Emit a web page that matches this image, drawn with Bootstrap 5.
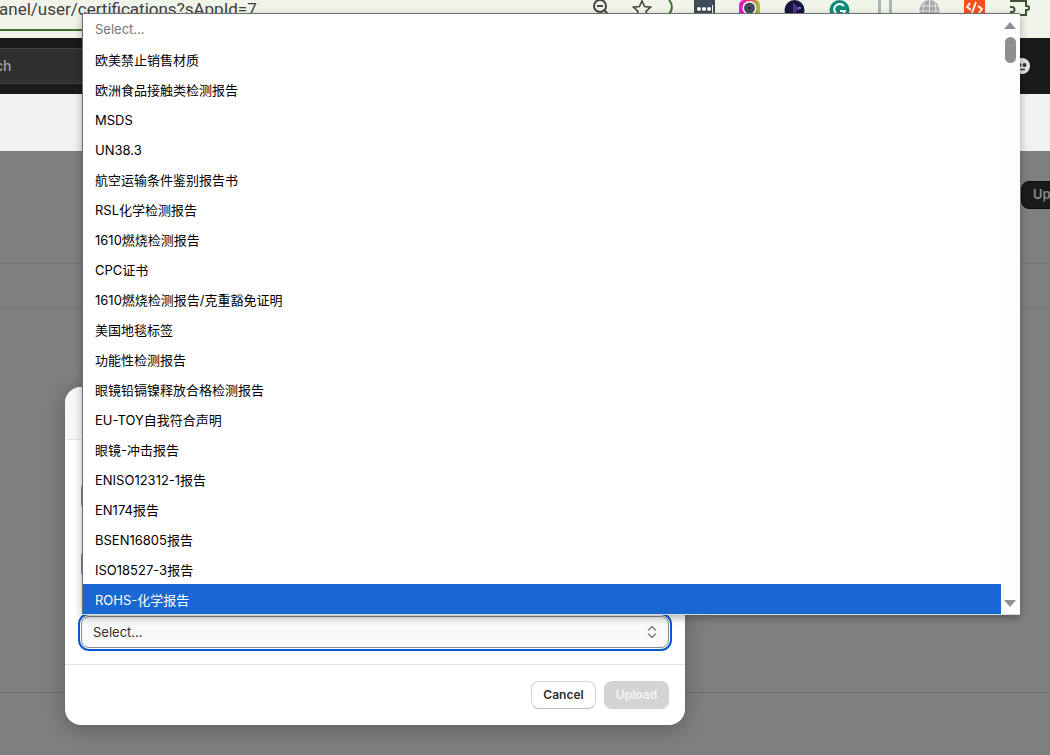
<!DOCTYPE html>
<html lang="zh">
<head>
  <meta charset="UTF-8">
  <meta name="viewport" content="width=device-width, initial-scale=1">
  <title>Certifications</title>
  <link href="https://cdn.jsdelivr.net/npm/bootstrap@5.3.2/dist/css/bootstrap.min.css" rel="stylesheet">
  <style>
    html, body { height: 755px; overflow: hidden; }
    body { background: #7f7f7f; font-family: Inter, "Noto Sans CJK SC", sans-serif; font-size: 13px; position: relative; }

    /* browser chrome */
    .chrome-bar { height: 38px; background: #f1f4e9; overflow: hidden; }
    .chrome-top { height: 29px; }
    .url-text { font-family: Roboto, sans-serif; font-size: 17px; line-height: 18px; color: #3c4043; margin-left: -1px; white-space: nowrap; }
    .chrome-icons { height: 29px; padding-right: 8px; }
    .tool-slot { width: 45px; height: 16px; display: flex; justify-content: center; }
    .tool-slot.is-narrow { width: 41px; }
    .tool-slot.is-arc { width: 20px; }
    .load-line { width: 220px; height: 2px; background: #3f7132; }

    /* page behind the dimming */
    .top-nav { height: 56px; background: #1a1a1a; padding: 10px 20px 10px 0; }
    .search-box { width: 300px; height: 36px; background: #303030; border: 1px solid #444; border-left: 0; color: #a5a5a5; font-size: 14px; line-height: 34px; font-weight: 500; text-indent: -5px; }
    .light-band { height: 57px; background: #f1f1f1; }
    .head-band { height: 113px; padding-top: 30px; border-bottom: 1px solid #727272; }
    .up-btn { width: 70px; height: 28px; margin-right: -41px; background: #1a1a1a; color: #8a8a8a; border: 1px solid #0d0d0d; border-radius: 8px; font-size: 13px; font-weight: 600; padding: 0 0 0 11px; text-align: left; }
    .tab-band { height: 44px; border-bottom: 1px solid #727272; }
    .list-band { height: 385px; border-bottom: 1px solid #6c6c6c; }

    /* modal */
    .upload-modal { position: absolute; left: 65px; top: 387px; width: 620px; height: 338px; background: #fff; border-radius: 16px; box-shadow: 0 4px 22px rgba(0, 0, 0, .28); overflow: hidden; }
    .upload-head { height: 53px; background: #f7f7f7; border-bottom: 1px solid #e3e3e3; }
    .upload-body { height: 224px; padding: 16px; gap: 12px; }
    .field-label { height: 20px; margin-bottom: 4px; }
    .field-input { height: 32px; padding: 0 12px; border: 1px solid #8a8a8a; border-radius: 8px; background: #fdfdfd; font-size: 13px; }
    .field-select { height: 32px; padding: 2px 11px 0; border: 1px solid #8a8a8a; border-radius: 8px; background-color: #fafafa; color: #303030; font-size: 13px; outline: 2px solid #005bd3; outline-offset: 1px; background-position: right 8px center; background-size: 16px 16px; background-image: url("data:image/svg+xml,%3Csvg xmlns='http://www.w3.org/2000/svg' viewBox='0 0 16 16'%3E%3Cpath d='M4.500 6 8 2.500 11.500 6M4.500 10 8 13.500 11.500 10' fill='none' stroke='%23808080' stroke-width='1.500' stroke-linecap='round' stroke-linejoin='round'/%3E%3C/svg%3E"); }
    .upload-foot { height: 61px; padding: 16px; gap: 8px; border-top: 1px solid #e3e3e3; }
    .btn-cancel, .btn-upload { width: 65px; height: 28px; padding: 0; font-size: 12px; font-weight: 600; border-radius: 8px; }
    .btn-cancel { background: #fff; color: #303030; border: 1px solid #d4d4d4; border-bottom-color: #bbb; }
    .btn-upload, .btn-upload:disabled { background: #d4d4d4; color: #f4f4f4; border: 0; opacity: 1; }

    /* native select popup */
    .select-popup { position: absolute; left: 82px; top: 13px; width: 938px; height: 602px; background: #fff; border-top: 1px solid #6f6f6f; border-left: 1px solid #6f6f6f; border-bottom: 1px solid #d8d8d8; box-shadow: 0 3px 8px rgba(0, 0, 0, .3); }
    .popup-list { flex: 1 1 auto; margin: 0; padding: 0; list-style: none; }
    .popup-list li { height: 30px; line-height: 32px; padding-left: 12px; color: #000; white-space: nowrap; }
    .popup-list li.is-placeholder { color: #757575; line-height: 30px; }
    .popup-list li.is-current { background: #1967d2; color: #fff; }
    .popup-scroll { width: 19px; background: #fdfdfd; padding: 8px 3px 7px; }
    .scroll-thumb { width: 11px; height: 26px; margin: 8px 0 0 1px; background: #8f8f8f; border-radius: 6px; }
    .scroll-up, .scroll-down { width: 0; height: 0; border-left: 6.5px solid transparent; border-right: 6.5px solid transparent; }
    .scroll-up { border-bottom: 7px solid #8f8f8f; }
    .scroll-down { border-top: 7px solid #8f8f8f; }
  </style>
</head>
<body>
  <div class="chrome-bar">
    <div class="chrome-top d-flex justify-content-between">
      <div class="url-text">anel/user/certifications?sAppId=7</div>
      <div class="chrome-icons d-flex align-items-start">
        <div class="tool-slot is-narrow"><svg width="20" height="16" viewBox="0 0 20 16"><circle cx="9" cy="6" r="6" fill="none" stroke="#444" stroke-width="2"/><path d="M6 6h6M13 10l4 4" stroke="#444" stroke-width="2"/></svg></div>
        <div class="tool-slot is-narrow"><svg width="20" height="16" viewBox="0 0 20 16"><path d="M10 1l2.600 5.500 5.900.7-4.400 4 1.200 5.800-5.300-3-5.300 3 1.200-5.800-4.400-4 5.900-.7z" fill="none" stroke="#444" stroke-width="1.600"/></svg></div>
        <div class="tool-slot is-arc"><svg width="20" height="16" viewBox="0 0 20 16"><path d="M7 0a10 10 0 0 1 0 14" fill="none" stroke="#3f7132" stroke-width="2"/></svg></div>
        <div class="tool-slot"><svg width="21" height="16" viewBox="0 0 21 16"><rect width="21" height="16" fill="#3f4a56"/><circle cx="5" cy="9" r="2" fill="#fff"/><circle cx="10" cy="9" r="2" fill="#fff"/><circle cx="15" cy="9" r="2" fill="#fff"/><rect x="18" y="5" width="1" height="8" fill="#fff"/></svg></div>
        <div class="tool-slot"><svg width="21" height="16" viewBox="0 0 21 16"><defs><linearGradient id="ring" x1="0" x2="1"><stop offset="0" stop-color="#d81bd8"/><stop offset=".5" stop-color="#ff2d6f"/><stop offset="1" stop-color="#9bd32c"/></linearGradient></defs><rect width="21" height="18" rx="5" fill="url(#ring)"/><circle cx="10.500" cy="8" r="7" fill="#fff"/><circle cx="10.500" cy="8" r="5.500" fill="#3f4d5c"/><circle cx="10.500" cy="8" r="1" fill="#111"/></svg></div>
        <div class="tool-slot"><svg width="21" height="16" viewBox="0 0 21 16"><circle cx="10.500" cy="10" r="10" fill="#14163a"/><path d="M9 2l6 7-6 6z" fill="#5b2d8e"/><path d="M14 8h3" stroke="#36d6d0" stroke-width="1.500"/></svg></div>
        <div class="tool-slot"><svg width="21" height="16" viewBox="0 0 21 16"><circle cx="10.500" cy="10" r="10" fill="#0b8a78"/><path d="M15 6a5.500 5.500 0 1 0 1 5h-5" fill="none" stroke="#fff" stroke-width="2"/></svg></div>
        <div class="tool-slot"><svg width="16" height="16" viewBox="0 0 16 16"><rect x="1" width="3" height="16" fill="#a9b4bb"/><rect x="12" width="3" height="16" fill="#a9b4bb"/></svg></div>
        <div class="tool-slot"><svg width="21" height="16" viewBox="0 0 21 16"><circle cx="10.500" cy="10" r="10" fill="#a8a8a8"/><path d="M.5 6h20M.5 11h20M10.500 0v20M5 1q-2 9 0 18M16 1q2 9 0 18" fill="none" stroke="#e6e6e6"/></svg></div>
        <div class="tool-slot"><svg width="21" height="16" viewBox="0 0 21 16"><rect width="21" height="16" fill="#f4511e"/><path d="M6 3 3 7l4 3M12 2 8 13M14 6l4 3-3 4" fill="none" stroke="#fff" stroke-width="1.800"/></svg></div>
        <div class="tool-slot"><svg width="21" height="16" viewBox="0 0 21 16"><path d="M1 1h3a2 2 0 0 1 0 0h13v5h1a2 2 0 0 1 0 4h-1v5H2v-3h1a2.500 2.500 0 0 0 0-5H1" fill="none" stroke="#3f5236" stroke-width="2"/></svg></div>
      </div>
    </div>
    <div class="load-line"></div>
  </div>

  <div class="top-nav d-flex justify-content-between align-items-center">
    <div class="search-box">ch</div>
    <svg width="16" height="16" viewBox="0 0 16 16"><circle cx="8" cy="8" r="8" fill="#e3e3e3"/><circle cx="5.500" cy="7" r="2" fill="#333"/><circle cx="10.500" cy="7" r="2" fill="#333"/><path d="M5 11.500h6" stroke="#333" stroke-width="1.500"/></svg>
  </div>
  <div class="light-band"></div>
  <div class="head-band d-flex justify-content-end align-items-start">
    <button type="button" class="btn up-btn">Up</button>
  </div>
  <div class="tab-band"></div>
  <div class="list-band"></div>

  <div class="upload-modal d-flex flex-column">
    <div class="upload-head"></div>
    <form class="upload-body d-flex flex-column">
      <div><div class="field-label"></div><input type="text" class="form-control field-input"></div>
      <div><div class="field-label"></div><input type="text" class="form-control field-input"></div>
      <div><div class="field-label"></div><select class="form-select field-select"><option>Select...</option></select></div>
    </form>
    <div class="upload-foot d-flex justify-content-end">
      <button type="button" class="btn btn-cancel">Cancel</button>
      <button type="button" class="btn btn-upload" disabled>Upload</button>
    </div>
  </div>

  <div class="select-popup d-flex">
    <ul class="popup-list">
      <li class="is-placeholder">Select...</li>
      <li>欧美禁止销售材质</li>
      <li>欧洲食品接触类检测报告</li>
      <li>MSDS</li>
      <li>UN38.3</li>
      <li>航空运输条件鉴别报告书</li>
      <li>RSL化学检测报告</li>
      <li>1610燃烧检测报告</li>
      <li>CPC证书</li>
      <li>1610燃烧检测报告/克重豁免证明</li>
      <li>美国地毯标签</li>
      <li>功能性检测报告</li>
      <li>眼镜铅镉镍释放合格检测报告</li>
      <li>EU-TOY自我符合声明</li>
      <li>眼镜-冲击报告</li>
      <li>ENISO12312-1报告</li>
      <li>EN174报告</li>
      <li>BSEN16805报告</li>
      <li>ISO18527-3报告</li>
      <li class="is-current">ROHS-化学报告</li>
    </ul>
    <div class="popup-scroll d-flex flex-column">
      <div class="scroll-up"></div>
      <div class="scroll-thumb flex-shrink-0"></div>
      <div class="scroll-down mt-auto"></div>
    </div>
  </div>

  <script src="https://cdn.jsdelivr.net/npm/bootstrap@5.3.2/dist/js/bootstrap.bundle.min.js"></script>
</body>
</html>
